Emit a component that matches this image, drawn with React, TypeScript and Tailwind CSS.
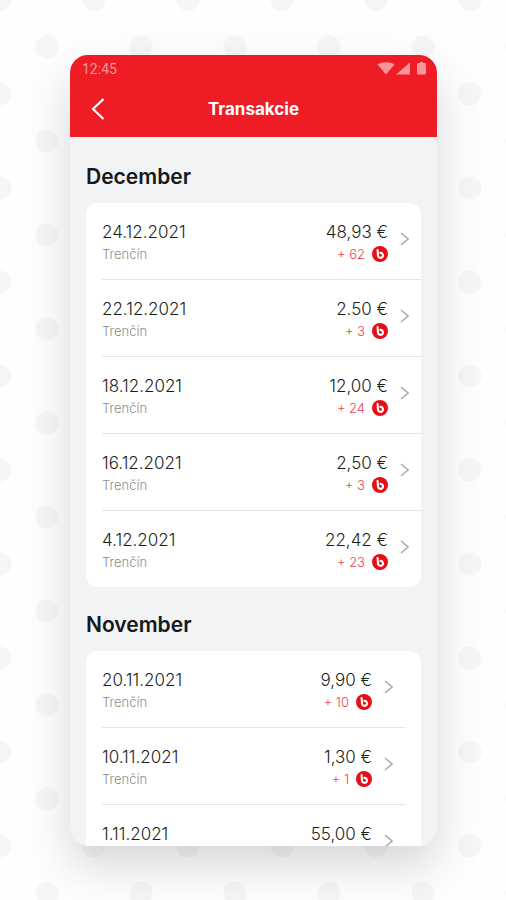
interface Transaction {
  date: string;
  amount: string;
  place?: string;
  points?: number;
}

interface MonthSectionProps {
  title: string;
  transactions: Transaction[];
  fullBleed?: boolean;
}

const december: Transaction[] = [
  { date: "24.12.2021", place: "Trenčín", amount: "48,93 €", points: 62 },
  { date: "22.12.2021", place: "Trenčín", amount: "2.50 €", points: 3 },
  { date: "18.12.2021", place: "Trenčín", amount: "12,00 €", points: 24 },
  { date: "16.12.2021", place: "Trenčín", amount: "2,50 €", points: 3 },
  { date: "4.12.2021", place: "Trenčín", amount: "22,42 €", points: 23 },
];

const november: Transaction[] = [
  { date: "20.11.2021", place: "Trenčín", amount: "9,90 €", points: 10 },
  { date: "10.11.2021", place: "Trenčín", amount: "1,30 €", points: 1 },
  { date: "1.11.2021", amount: "55,00 €" },
];

function PointsIcon() {
  return (
    <svg viewBox="0 0 16 16" className="w-4 h-4" aria-hidden="true">
      <circle cx="8" cy="8" r="8" fill="#e60f17" />
      <path
        d="M5.6 4 L6 9.2 A2.5 2.5 0 1 0 8.4 6.9"
        fill="none"
        stroke="#fff"
        strokeWidth="2.1"
        strokeLinecap="round"
        strokeLinejoin="round"
      />
    </svg>
  );
}

function StatusBar() {
  return (
    <div className="flex items-center justify-between h-7 pl-3 pr-[10px] text-[#f7969a]">
      <span className="font-[Roboto,sans-serif] text-sm">12:45</span>
      <svg viewBox="0 0 50 14" className="w-[50px] h-[14px]" fill="currentColor" aria-hidden="true">
        <path d="M0.500 2.500 C5 -0.600 13 -0.600 17.500 2.500 L9 12.500 Z" />
        <path d="M33 0.500 V12.500 H19 Z" />
        <path d="M43 0 H46 V1 H48 Q49 1 49 2 V11.500 Q49 12.500 48 12.500 H41 Q40 12.500 40 11.500 V2 Q40 1 41 1 H43 Z" />
      </svg>
    </div>
  );
}

function Header() {
  return (
    <header className="shrink-0 bg-[#ee1c25] text-white">
      <StatusBar />
      <div className="grid grid-cols-[56px_1fr_56px] items-center h-[54px] pb-0.5">
        <button type="button" aria-label="Späť" className="flex items-center justify-center h-12">
          <svg viewBox="0 0 14 22" className="w-[14px] h-[22px]" fill="none" stroke="currentColor" strokeWidth="2.2" aria-hidden="true">
            <path d="M12.5 1 L2 11 L12.5 21" />
          </svg>
        </button>
        <h1 className="text-center text-[17px] leading-6 font-bold">Transakcie</h1>
      </div>
    </header>
  );
}

function MonthSection({ title, transactions, fullBleed = false }: MonthSectionProps) {
  return (
    <section>
      <h2 className="text-[21px] leading-6 font-semibold text-[#16181a]">{title}</h2>
      <ul className={`mt-[14px] pl-4 bg-white rounded-xl divide-y divide-[#e3e5e6] ${fullBleed ? "" : "pr-4"}`}>
        {transactions.map(({ date, place, amount, points }) => (
          <li key={date}>
            <a href="#detail" className="flex items-start h-[76px] pt-[17px] pr-3">
              <div className="flex-1">
                <p className="text-[17px] leading-6 font-light text-[#1c1e20]">{date}</p>
                {place && <p className="text-[13px] leading-5 font-light text-[#8b8d8f]">{place}</p>}
              </div>
              <div className="flex flex-col items-end">
                <p className="text-[17px] leading-6 font-light text-[#1c1e20]">{amount}</p>
                {points && (
                  <p className="flex items-center gap-[7px] text-[13px] leading-5 font-light text-[#ec454d]">
                    + {points}
                    <PointsIcon />
                  </p>
                )}
              </div>
              <svg viewBox="0 0 9 14" className="ml-3 mt-3 w-[9px] h-[14px]" fill="none" stroke="#a9abad" strokeWidth="1.5" aria-hidden="true">
                <path d="M1 1 L8 7 L1 13" />
              </svg>
            </a>
          </li>
        ))}
      </ul>
    </section>
  );
}

export default function App() {
  return (
    <div className="flex flex-col h-screen pt-[55px] pb-[54px] pl-[70px] pr-[69px] font-[Inter,sans-serif] bg-[#fefefe] bg-[radial-gradient(circle,#f6f6f6_11px,transparent_12px),radial-gradient(circle,#f6f6f6_11px,transparent_12px)] bg-[length:94px_94px] bg-[position:0_0,-47px_-47px]">
      <div className="flex flex-col flex-1 min-h-0 overflow-hidden rounded-[18px] bg-[#f1f3f5] shadow-[0_20px_44px_rgba(50,60,70,0.2)]">
        <Header />
        <main className="flex flex-col gap-[26px] flex-1 min-h-0 overflow-hidden px-4 pt-7">
          <MonthSection title="December" transactions={december} fullBleed />
          <MonthSection title="November" transactions={november} />
        </main>
      </div>
    </div>
  );
}
